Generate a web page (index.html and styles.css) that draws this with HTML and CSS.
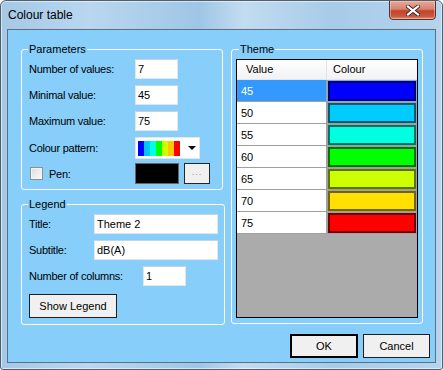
FILE: index.html
```html
<!DOCTYPE html>
<html lang="en">
<head>
    <meta charset="UTF-8">
    <meta name="viewport" content="width=device-width, initial-scale=1.0">
    <title>Colour table</title>
    <link rel="stylesheet" href="styles.css">
</head>
<body>
    <div class="window">
        <div class="titlebar">
            <span class="caption">Colour table</span>
            <button class="close" title="Close">
                <svg width="14" height="11" viewBox="0 0 14 11">
                    <path d="M2 1.5 L12 9.5 M12 1.5 L2 9.5" stroke="#3a2a26" stroke-width="4" stroke-linecap="square"/>
                    <path d="M2 1.5 L12 9.5 M12 1.5 L2 9.5" stroke="#ffffff" stroke-width="2.2" stroke-linecap="square"/>
                </svg>
            </button>
        </div>

        <div class="client">
            <div class="groups">
                <div class="left-col">
                    <fieldset class="group params">
                        <legend>Parameters</legend>
                        <div class="row">
                            <label class="lbl wide" for="count">Number of values:</label>
                            <input class="field small" id="count" type="text" value="7">
                        </div>
                        <div class="row">
                            <label class="lbl wide" for="min">Minimal value:</label>
                            <input class="field small" id="min" type="text" value="45">
                        </div>
                        <div class="row">
                            <label class="lbl wide" for="max">Maximum value:</label>
                            <input class="field small" id="max" type="text" value="75">
                        </div>
                        <div class="row combo-row">
                            <span class="lbl wide">Colour pattern:</span>
                            <div class="combo">
                                <div class="stripes">
                                    <span style="background:#0000ff"></span>
                                    <span style="background:#00c8ff"></span>
                                    <span style="background:#00ffe0"></span>
                                    <span style="background:#00ff00"></span>
                                    <span style="background:#ccff00"></span>
                                    <span style="background:#ffc800"></span>
                                    <span style="background:#ff0000"></span>
                                </div>
                                <span class="arrow"></span>
                            </div>
                        </div>
                        <div class="row pen-row">
                            <label class="lbl wide check">
                                <span class="checkbox"></span>
                                <span>Pen:</span>
                            </label>
                            <span class="pen-swatch"></span>
                            <button class="dots">...</button>
                        </div>
                    </fieldset>

                    <fieldset class="group legend-box">
                        <legend>Legend</legend>
                        <div class="row">
                            <label class="lbl narrow" for="title">Title:</label>
                            <input class="field long" id="title" type="text" value="Theme 2">
                        </div>
                        <div class="row">
                            <label class="lbl narrow" for="subtitle">Subtitle:</label>
                            <input class="field long" id="subtitle" type="text" value="dB(A)">
                        </div>
                        <div class="row">
                            <label class="lbl cols" for="columns">Number of columns:</label>
                            <input class="field small" id="columns" type="text" value="1">
                        </div>
                        <button class="btn show-legend">Show Legend</button>
                    </fieldset>
                </div>

                <fieldset class="group theme">
                    <legend>Theme</legend>
                    <div class="grid">
                        <div class="grid-head">
                            <div class="hcell">Value</div>
                            <div class="hcell">Colour</div>
                        </div>
                        <div class="grid-row selected">
                            <div class="vcell">45</div>
                            <div class="ccell"><span style="background:#0000ff"></span></div>
                        </div>
                        <div class="grid-row">
                            <div class="vcell">50</div>
                            <div class="ccell"><span style="background:#00ccff"></span></div>
                        </div>
                        <div class="grid-row">
                            <div class="vcell">55</div>
                            <div class="ccell"><span style="background:#00ffe0"></span></div>
                        </div>
                        <div class="grid-row">
                            <div class="vcell">60</div>
                            <div class="ccell"><span style="background:#00ff00"></span></div>
                        </div>
                        <div class="grid-row">
                            <div class="vcell">65</div>
                            <div class="ccell"><span style="background:#ccff00"></span></div>
                        </div>
                        <div class="grid-row">
                            <div class="vcell">70</div>
                            <div class="ccell"><span style="background:#ffe000"></span></div>
                        </div>
                        <div class="grid-row">
                            <div class="vcell">75</div>
                            <div class="ccell"><span style="background:#ff0000"></span></div>
                        </div>
                    </div>
                </fieldset>
            </div>

            <div class="actions">
                <button class="btn default">OK</button>
                <button class="btn">Cancel</button>
            </div>
        </div>
    </div>
</body>
</html>
```

FILE: styles.css
```css
* {
    box-sizing: border-box;
}

body {
    margin: 0;
    font-family: "Liberation Sans", Arial, sans-serif;
    font-size: 11px;
    color: #000;
}

.window {
    width: 443px;
    height: 370px;
    border: 1px solid #4f5f6d;
    border-radius: 6px 6px 3px 3px;
    background: linear-gradient(90deg, #a4c8e6 0%, #b9d7ef 20%, #9fc6e6 45%, #c2dcf1 55%, #a7cbe8 75%, #b5d4ee 100%);
    box-shadow: inset 0 0 0 1px rgba(255, 255, 255, 0.55);
    display: flex;
    flex-direction: column;
    overflow: hidden;
}

.titlebar {
    height: 28px;
    display: flex;
    align-items: flex-start;
    justify-content: space-between;
}

.caption {
    font-family: "Segoe UI", "Liberation Sans", Arial, sans-serif;
    font-size: 12px;
    margin: 7px 0 0 7px;
}

.close {
    width: 47px;
    height: 20px;
    margin: -1px 6px 0 0;
    padding: 0;
    border: 1px solid #53332c;
    border-radius: 0 0 4px 4px;
    background: linear-gradient(#e9aa9a 0%, #d7806f 45%, #c3432b 55%, #c9573e 85%, #e0917a 100%);
    box-shadow: inset 0 0 0 1px rgba(255, 220, 210, 0.45);
    display: flex;
    align-items: center;
    justify-content: center;
}

.client {
    height: 334px;
    margin: 0 6px 0 6px;
    border: 1px solid #5d6f80;
    background: #87cefa;
    padding: 12px 0 0 13px;
}

.groups {
    display: flex;
    gap: 8px;
    height: 283px;
}

.left-col {
    width: 202px;
    display: flex;
    flex-direction: column;
    gap: 7px;
}

.group {
    margin: 0;
    border: 1px solid #fff;
    border-radius: 3px;
    padding: 3px 6px 0 7px;
}

.group legend {
    padding: 0 1px;
    margin-left: -1px;
    line-height: 14px;
    height: 14px;
}

.params {
    height: 148px;
}

.legend-box {
    height: 128px;
}

.theme {
    width: 192px;
    height: 282px;
    padding: 3px 4px 0 4px;
}

.theme legend {
    margin-left: 3px;
}

.row {
    display: flex;
    align-items: center;
    height: 20px;
    margin-bottom: 6px;
}

.lbl {
    flex: none;
    letter-spacing: -0.25px;
}

.wide {
    width: 106px;
}

.narrow {
    width: 65px;
}

.cols {
    width: 114px;
}

.field {
    height: 20px;
    border: 1px solid #dfe6ec;
    border-top-color: #c9d3dc;
    background: #fff;
    font-family: inherit;
    font-size: 11px;
    padding: 0 2px;
    outline: none;
}

.small {
    width: 43px;
}

.long {
    width: 124px;
}

.combo-row {
    height: 22px;
    margin-bottom: 4px;
}

.combo {
    width: 65px;
    height: 22px;
    background: #fff;
    border: 1px solid #e1e6ea;
    display: flex;
    align-items: center;
    padding: 0 0 0 2px;
}

.stripes {
    display: flex;
    height: 15px;
}

.stripes span {
    width: 6px;
}

.arrow {
    margin-left: 8px;
    border-left: 4px solid transparent;
    border-right: 4px solid transparent;
    border-top: 4px solid #000;
}

.pen-row {
    height: 21px;
}

.check {
    display: flex;
    align-items: center;
    gap: 6px;
    padding-left: 1px;
}

.checkbox {
    width: 13px;
    height: 13px;
    border: 1px solid #8e8f8f;
    background: linear-gradient(135deg, #dcdcdc, #fbfbfb);
    box-shadow: inset 0 0 0 1px #f4f4f4;
}

.pen-swatch {
    width: 44px;
    height: 21px;
    background: #000;
    border: 1px solid #646464;
}

.dots {
    width: 26px;
    height: 21px;
    margin-left: 5px;
    padding: 0 0 3px;
    background: #f0f0f0;
    border: 1px solid #262626;
    color: #8a8a8a;
    font-size: 9px;
    font-family: inherit;
    letter-spacing: 1px;
}

.btn {
    height: 24px;
    padding: 0;
    background: #f0f0f0;
    border: 1px solid #1e1e1e;
    font-family: inherit;
    font-size: 11px;
    color: #000;
}

.show-legend {
    width: 88px;
    margin-top: 2px;
}

.grid {
    width: 182px;
    height: 259px;
    border: 1px solid #000;
    background: #ababab;
}

.grid-head {
    display: flex;
    height: 20px;
    background: linear-gradient(#ffffff, #f1f2f4);
    border-bottom: 1px solid #e4e6ea;
}

.hcell {
    width: 90px;
    padding: 3px 0 0 9px;
    border-right: 1px solid #e2e3e6;
}

.hcell + .hcell {
    padding-left: 6px;
    border-right: none;
}

.grid-row {
    display: flex;
    height: 22px;
}

.vcell {
    width: 90px;
    background: #fff;
    border-right: 1px solid #a0a0a0;
    border-bottom: 1px solid #a0a0a0;
    padding: 5px 0 0 4px;
}

.ccell {
    width: 90px;
    background: #a0a0a0;
    padding: 1px 1px 1px 1px;
}

.ccell span {
    display: block;
    height: 20px;
    border: 2px solid rgba(0, 0, 0, 0.55);
}

.selected .vcell {
    background: #3399ff;
    color: #fff;
}

.selected .ccell {
    background: #7aaee0;
}

.actions {
    display: flex;
    justify-content: flex-end;
    gap: 5px;
    margin-top: 9px;
    padding-right: 5px;
}

.default {
    width: 68px;
    border: 2px solid #000;
}

.actions .btn:last-child {
    width: 67px;
}
```
